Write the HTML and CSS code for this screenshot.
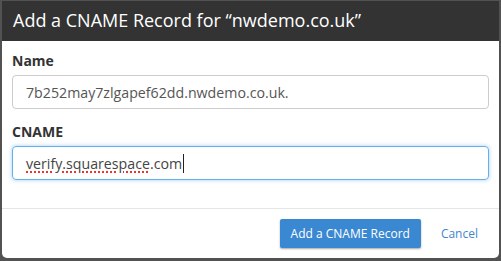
FILE: index.html
```html
<!DOCTYPE html>
<html>
<head>
<meta charset="utf-8">
<link rel="stylesheet" href="styles.css">
</head>
<body>
<div class="modal">
  <div class="modal-header">Add a CNAME Record for “nwdemo.co.uk”</div>
  <div class="modal-body">
    <div class="field">
      <div class="label">Name</div>
      <div class="input">7b252may7zlgapef62dd.nwdemo.co.uk.</div>
    </div>
    <div class="field">
      <div class="label">CNAME</div>
      <div class="input focus"><span class="spell">verify.squarespace</span>.com<span class="caret"></span></div>
    </div>
  </div>
  <div class="modal-footer">
    <div class="btn">Add a CNAME Record</div>
    <div class="link">Cancel</div>
  </div>
</div>
</body>
</html>
```
FILE: styles.css
```css
html, body {
  margin: 0;
  padding: 0;
  background: #525252;
  font-family: "Open Sans", "Liberation Sans", sans-serif;
}
.modal {
  margin: 1px 2px 0 2px;
  width: 497px;
  height: 257px;
  background: #fff;
  border-radius: 0 0 5px 5px;
  display: flex;
  flex-direction: column;
  overflow: hidden;
}
.modal-header {
  background: #333;
  color: #fff;
  height: 40px;
  padding: 0 11px 2px 11px;
  display: flex;
  align-items: center;
  font-size: 18px;
  box-sizing: border-box;
}
.modal-body {
  padding: 11px 10px 0 10px;
  flex: 1;
  border-bottom: 1px solid #e5e5e5;
}
.field {
  display: flex;
  flex-direction: column;
  gap: 5px;
  margin-bottom: 14px;
}
.label {
  font-weight: bold;
  font-size: 14px;
  line-height: 18px;
  color: #333;
}
.input {
  height: 34px;
  box-sizing: border-box;
  border: 1px solid #ccc;
  border-radius: 4px;
  padding: 0 12px 0 13px;
  font-size: 14.2px;
  color: #555;
  display: flex;
  align-items: center;
}
.input.focus {
  border-color: #66afe9;
  box-shadow: 0 0 4px rgba(102, 175, 233, 0.6);
  color: #444;
}
.spell {
  text-decoration: underline dotted #e33;
  text-decoration-thickness: 2px;
  text-underline-offset: 3px;
}
.caret {
  display: inline-block;
  width: 1px;
  height: 19px;
  background: #222;
  margin-left: 1px;
}
.modal-footer {
  height: 49px;
  display: flex;
  align-items: center;
  justify-content: flex-end;
  padding: 1px 21px 2px 0;
  box-sizing: border-box;
  gap: 20px;
}
.btn {
  background: #3a88d2;
  color: #fff;
  font-size: 12px;
  height: 29px;
  padding: 0 11px;
  display: flex;
  align-items: center;
  border-radius: 2px;
  box-shadow: 0 1px 2px rgba(0,0,0,0.35);
}
.link {
  color: #3f86cf;
  font-size: 12px;
}
```
